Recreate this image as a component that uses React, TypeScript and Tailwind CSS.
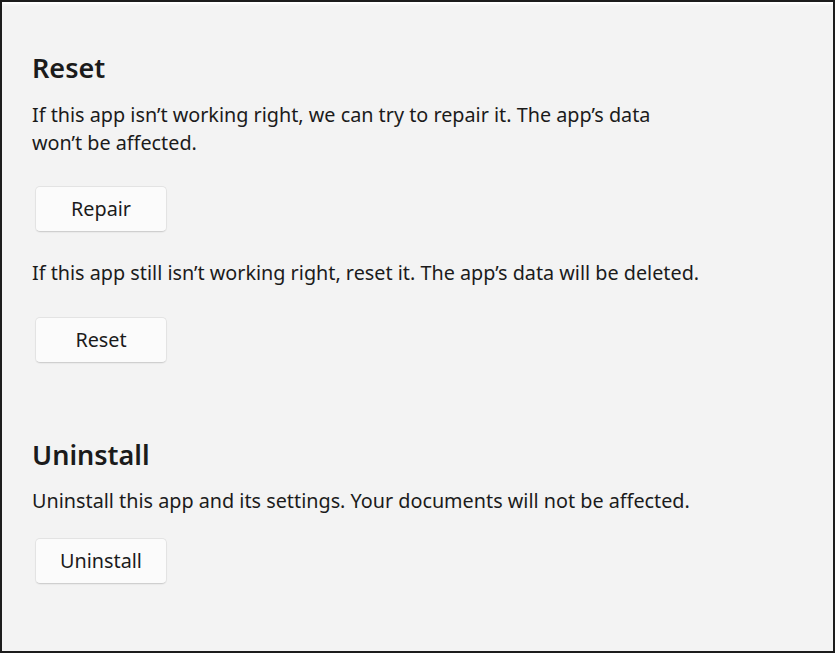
import React from "react";

function SettingsButton({ label }: { label: string }) {
  return (
    <button className="w-[132px] h-[46px] rounded-[5px] bg-[#fbfbfb] border border-[#e3e3e3] border-b-[#cfcfcf] text-[19.8px] text-[#1b1b1b] shadow-[0_1px_1px_rgba(0,0,0,0.04)]">
      {label}
    </button>
  );
}

export default function App() {
  return (
    <div
      className="w-[835px] h-[653px] border-2 border-[#1c1c1c] bg-[#f3f3f3] text-[#1b1b1b] overflow-hidden"
      style={{ fontFamily: '"Noto Sans", "Open Sans", sans-serif' }}
    >
      <div className="h-[4px] border-t-2 border-white bg-[#f6f6f6]" />
      <div className="pl-[30px] pt-[44px]">
        {/* Reset section */}
        <h2 className="text-[27px] leading-[36px] font-semibold">Reset</h2>
        <p className="mt-[15px] text-[19.8px] leading-[28px]">
          If this app isn’t working right, we can try to repair it. The app’s data
          <br />
          won’t be affected.
        </p>
        <div className="mt-[29px] pl-[3px]">
          <SettingsButton label="Repair" />
        </div>
        <p className="mt-[27px] text-[19.8px] leading-[28px]">
          If this app still isn’t working right, reset it. The app’s data will be deleted.
        </p>
        <div className="mt-[30px] pl-[3px]">
          <SettingsButton label="Reset" />
        </div>

        {/* Uninstall section */}
        <h2 className="mt-[74px] text-[27px] leading-[36px] font-semibold">Uninstall</h2>
        <p className="mt-[14px] text-[19.8px] leading-[28px]">
          Uninstall this app and its settings. Your documents will not be affected.
        </p>
        <div className="mt-[23px] pl-[3px]">
          <SettingsButton label="Uninstall" />
        </div>
      </div>
    </div>
  );
}
